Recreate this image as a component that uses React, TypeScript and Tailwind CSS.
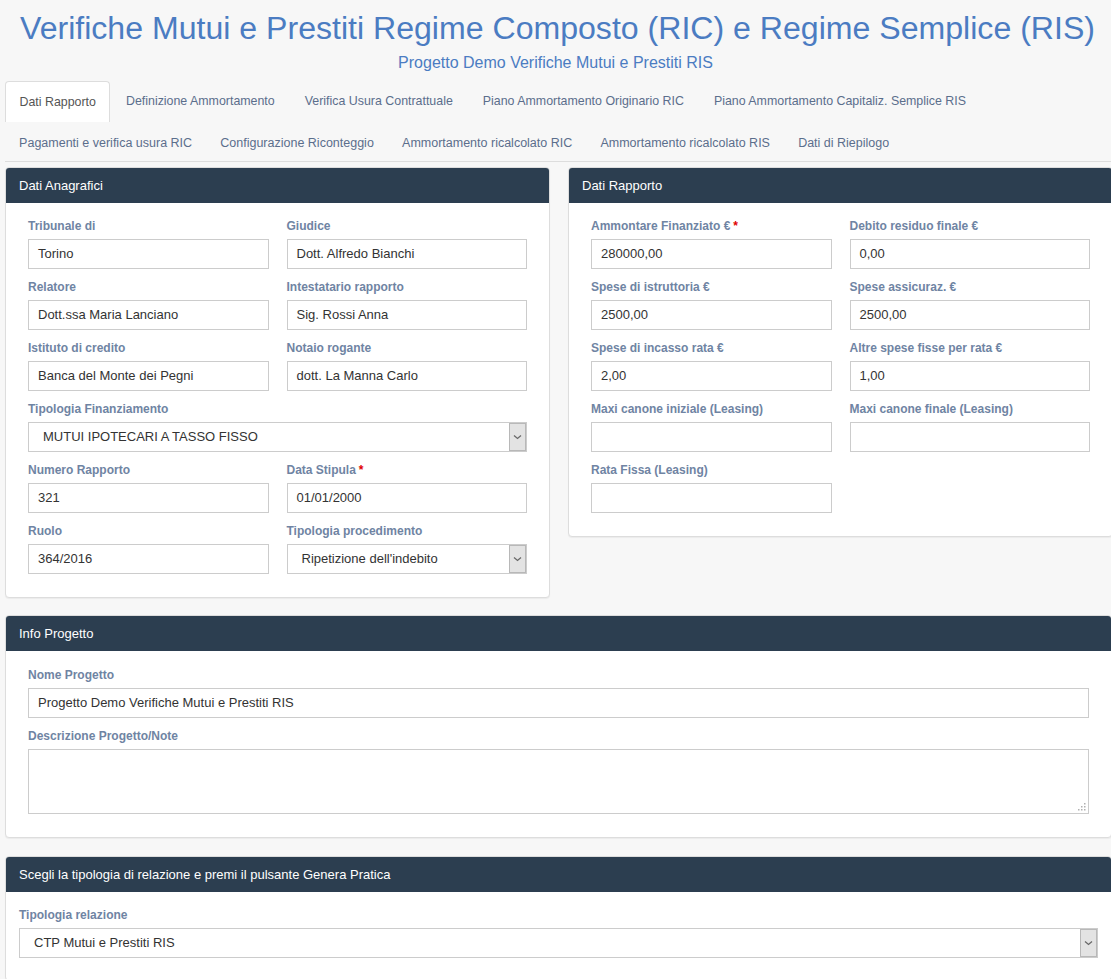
import React from "react";

const FONT = "font-['Liberation_Sans',Arial,sans-serif]";

function Label({ text, req }: { text: string; req?: boolean }) {
  return (
    <div className="mb-[4px] h-[17px] text-[12px] font-bold leading-[17px] text-[#6f84a3]">
      {text}
      {req && <span className="ml-[3px] text-[#e00000]">*</span>}
    </div>
  );
}

function Input({ value }: { value?: string }) {
  return (
    <div className="flex h-[30px] items-center border border-[#cccccc] bg-white pl-[9px] text-[13px] text-[#333333]">
      {value}
    </div>
  );
}

function Select({ value }: { value: string }) {
  return (
    <div className="flex h-[30px] items-stretch border border-[#cccccc] bg-white text-[13px] text-[#333333]">
      <div className="flex flex-1 items-center pl-[14px]">{value}</div>
      <div className="flex w-[17px] items-center justify-center border border-[#b8b8b8] bg-[#e3e3e3]">
        <svg width="9" height="6" viewBox="0 0 9 6">
          <path d="M1 1.5 L4.5 4.5 L8 1.5" fill="none" stroke="#6a6a6a" strokeWidth="1.3" />
        </svg>
      </div>
    </div>
  );
}

function Field({ label, value, req, select }: { label: string; value?: string; req?: boolean; select?: boolean }) {
  return (
    <div>
      <Label text={label} req={req} />
      {select ? <Select value={value || ""} /> : <Input value={value} />}
    </div>
  );
}

function Panel({ title, width, children }: { title: string; width: string; children: React.ReactNode }) {
  return (
    <div className={`${width} shrink-0 overflow-hidden rounded-[4px] border border-[#dddddd] bg-white shadow-[0_1px_1px_rgba(0,0,0,0.05)]`}>
      <div className="flex h-[35px] items-center bg-[#2c3e50] pl-[13px] text-[13px] text-white">{title}</div>
      {children}
    </div>
  );
}

const row1 = [
  "Dati Rapporto",
  "Definizione Ammortamento",
  "Verifica Usura Contrattuale",
  "Piano Ammortamento Originario RIC",
  "Piano Ammortamento Capitaliz. Semplice RIS",
];
const row2 = [
  "Pagamenti e verifica usura RIC",
  "Configurazione Riconteggio",
  "Ammortamento ricalcolato RIC",
  "Ammortamento ricalcolato RIS",
  "Dati di Riepilogo",
];

export default function App() {
  return (
    <div className={`${FONT} h-[979px] w-[1111px] overflow-hidden bg-[#f7f7f7]`}>
      <h1 className="whitespace-nowrap pt-[8px] pl-[4px] text-center text-[32.1px] leading-[40px] text-[#4b7cc2]">
        Verifiche Mutui e Prestiti Regime Composto (RIC) e Regime Semplice (RIS)
      </h1>
      <div className="mt-[5px] text-center text-[16px] leading-[20px] text-[#4b7cc2]">
        Progetto Demo Verifiche Mutui e Prestiti RIS
      </div>

      <div className="ml-[5px] mt-[8px] w-[1106px] border-b border-[#dddddd]">
        <div className="flex h-[41px] items-stretch">
          {row1.map((t, i) => (
            <div
              key={t}
              className={
                i === 0
                  ? "mr-[0.5px] flex items-center rounded-t-[4px] border border-b-0 border-[#dddddd] bg-white px-[13.5px] text-[12.4px] text-[#555555]"
                  : "flex items-center px-[15px] text-[12.4px] text-[#5b6e8c]"
              }
            >
              {t}
            </div>
          ))}
        </div>
        <div className="flex h-[39px] items-center pt-[4px]">
          {row2.map((t) => (
            <div key={t} className="flex items-center px-[14.1px] text-[12.5px] text-[#5b6e8c]">
              {t}
            </div>
          ))}
        </div>
      </div>

      <div className="ml-[5px] mt-[5px] flex w-[1108px] items-start gap-[18px]">
        <Panel title="Dati Anagrafici" width="w-[545px]">
          <div className="grid grid-cols-2 gap-x-[18px] gap-y-[10px] px-[22px] pb-[23px] pt-[15px]">
            <Field label="Tribunale di" value="Torino" />
            <Field label="Giudice" value="Dott. Alfredo Bianchi" />
            <Field label="Relatore" value="Dott.ssa Maria Lanciano" />
            <Field label="Intestatario rapporto" value="Sig. Rossi Anna" />
            <Field label="Istituto di credito" value="Banca del Monte dei Pegni" />
            <Field label="Notaio rogante" value="dott. La Manna Carlo" />
            <div className="col-span-2">
              <Field label="Tipologia Finanziamento" value="MUTUI IPOTECARI A TASSO FISSO" select />
            </div>
            <Field label="Numero Rapporto" value="321" />
            <Field label="Data Stipula" value="01/01/2000" req />
            <Field label="Ruolo" value="364/2016" />
            <Field label="Tipologia procedimento" value="Ripetizione dell'indebito" select />
          </div>
        </Panel>
        <Panel title="Dati Rapporto" width="w-[545px]">
          <div className="grid grid-cols-2 gap-x-[18px] gap-y-[10px] px-[22px] pb-[23px] pt-[15px]">
            <Field label="Ammontare Finanziato €" value="280000,00" req />
            <Field label="Debito residuo finale €" value="0,00" />
            <Field label="Spese di istruttoria €" value="2500,00" />
            <Field label="Spese assicuraz. €" value="2500,00" />
            <Field label="Spese di incasso rata €" value="2,00" />
            <Field label="Altre spese fisse per rata €" value="1,00" />
            <Field label="Maxi canone iniziale (Leasing)" />
            <Field label="Maxi canone finale (Leasing)" />
            <Field label="Rata Fissa (Leasing)" />
          </div>
        </Panel>
      </div>

      <div className="ml-[5px] mt-[17px] flex w-[1107px] flex-col gap-[18px]">
        <Panel title="Info Progetto" width="w-[1107px]">
          <div className="flex flex-col gap-y-[10px] px-[22px] pb-[23px] pt-[16px]">
            <Field label="Nome Progetto" value="Progetto Demo Verifiche Mutui e Prestiti RIS" />
            <div>
              <Label text="Descrizione Progetto/Note" />
              <div className="relative h-[65px] border border-[#cccccc] bg-white">
                <svg className="absolute bottom-[2px] right-[2px]" width="9" height="9" viewBox="0 0 9 9">
                  <rect x="7" y="1" width="1.5" height="1.5" fill="#b0b0b0" />
                  <rect x="4" y="4" width="1.5" height="1.5" fill="#b0b0b0" />
                  <rect x="7" y="4" width="1.5" height="1.5" fill="#b0b0b0" />
                  <rect x="1" y="7" width="1.5" height="1.5" fill="#b0b0b0" />
                  <rect x="4" y="7" width="1.5" height="1.5" fill="#b0b0b0" />
                  <rect x="7" y="7" width="1.5" height="1.5" fill="#b0b0b0" />
                </svg>
              </div>
            </div>
          </div>
        </Panel>
        <Panel title="Scegli la tipologia di relazione e premi il pulsante Genera Pratica" width="w-[1107px]">
          <div className="px-[13px] pb-[22px] pt-[15px]">
            <div className="w-[1079px]">
              <Field label="Tipologia relazione" value="CTP Mutui e Prestiti RIS" select />
            </div>
          </div>
        </Panel>
      </div>
    </div>
  );
}
